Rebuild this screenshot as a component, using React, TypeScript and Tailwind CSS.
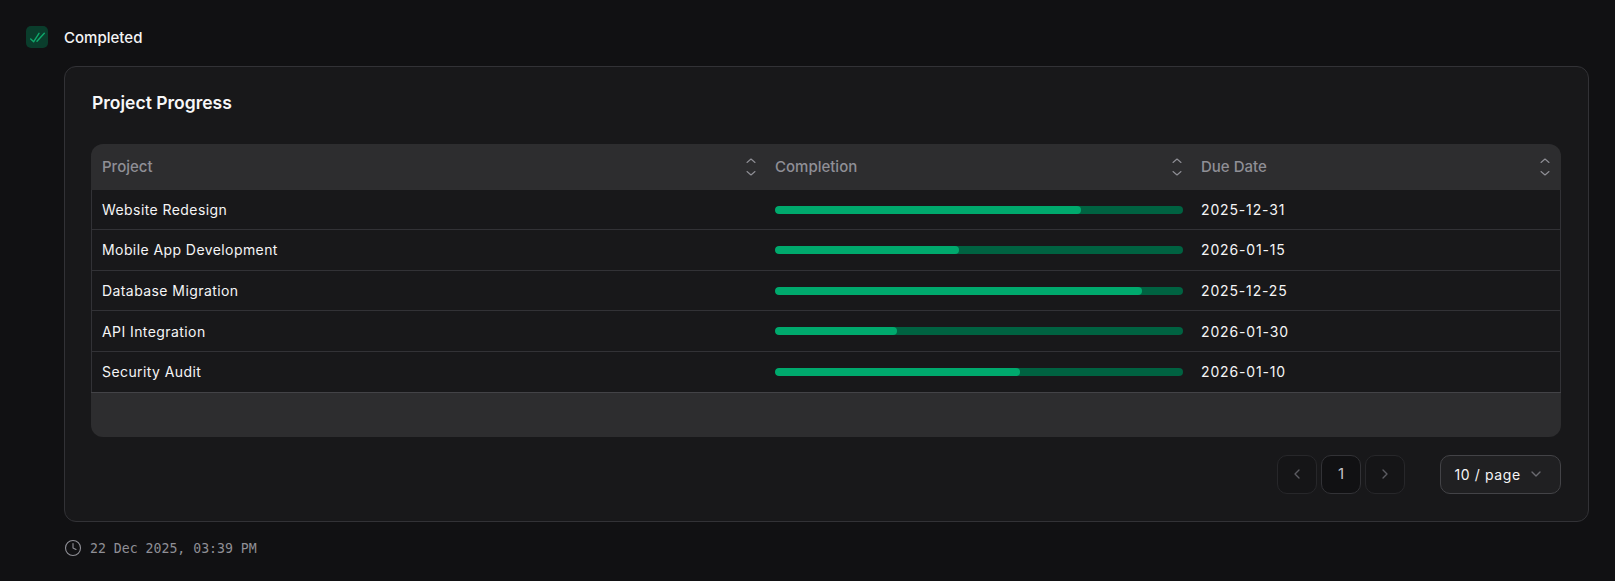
import { ChevronDown, ChevronLeft, ChevronRight, Clock } from "lucide-react";

const projects = [
  { name: "Website Redesign", percent: 75, due: "2025-12-31" },
  { name: "Mobile App Development", percent: 45, due: "2026-01-15" },
  { name: "Database Migration", percent: 90, due: "2025-12-25" },
  { name: "API Integration", percent: 30, due: "2026-01-30" },
  { name: "Security Audit", percent: 60, due: "2026-01-10" },
];

function SortIcon() {
  return (
    <svg width="10" height="18" viewBox="0 0 10 18" fill="none" stroke="#8f8f96" strokeWidth="1.1" strokeLinecap="round" strokeLinejoin="round">
      <path d="M1 4.5 L5 1 L9 4.5" />
      <path d="M1 13.5 L5 17 L9 13.5" />
    </svg>
  );
}

function HeaderCell({ label, last }: { label: string; last?: boolean }) {
  return (
    <div className={`flex h-full items-center justify-between pl-[11px] ${last ? "pr-[11px]" : "pr-[8px]"}`}>
      <span>{label}</span>
      <SortIcon />
    </div>
  );
}

export default function App() {
  return (
    <div className="min-h-[581px] bg-[#111113] font-['Inter',sans-serif] text-white">
      <div className="flex flex-col px-[26px] pt-[26px]">
        {/* Status row */}
        <div className="flex h-[22px] items-center gap-[16px]">
          <div className="flex h-[22px] w-[22px] items-center justify-center rounded-[5px] bg-[#0a3d2c]">
            <svg width="16" height="16" viewBox="0 0 16 16" fill="none" stroke="#10a86c" strokeWidth="1.4" strokeLinecap="round" strokeLinejoin="round">
              <path d="M1.7 10 L4.7 12.7 L10 4.3" />
              <path d="M8 12.3 L15.3 4.3" />
            </svg>
          </div>
          <span className="relative top-[1px] text-[15px] font-medium tracking-[0.02px] text-[#f5f5f6]">Completed</span>
        </div>

        {/* Card */}
        <div className="ml-[38px] mt-[18px] flex h-[456px] flex-col rounded-[12px] border border-[#323236] bg-[#18181a] pl-[26px] pr-[27px]">
          <h2 className="mt-[24px] h-[24px] pl-[1px] text-[17.5px] font-semibold leading-[24px] text-[#f7f7f8]">Project Progress</h2>

          <div className="mt-[29px] overflow-hidden rounded-[12px] bg-[#2d2d2f]">
            <div className="grid h-[46px] grid-cols-[673px_426px_1fr] text-[15px] font-medium text-[#8f8f96]">
              <HeaderCell label="Project" />
              <HeaderCell label="Completion" />
              <HeaderCell label="Due Date" last />
            </div>
            <div className="border-x border-[#323236] bg-[#18181a]">
              {projects.map((p) => (
                <div key={p.name} className="grid h-[40.7px] grid-cols-[672px_426px_1fr] items-center border-t border-[#323236] text-[14px] tracking-[0.42px] text-[#f5f5f6] first:h-[39px] first:border-t-0">
                  <div className="pl-[10px]">{p.name}</div>
                  <div className="pl-[11px] pr-[7px]">
                    <div className="h-2 overflow-hidden rounded-full bg-[#006241]">
                      <div className="h-full rounded-full bg-[#00a96d]" style={{ width: `${p.percent}%` }} />
                    </div>
                  </div>
                  <div className="pl-[11px] tracking-[0.85px]">{p.due}</div>
                </div>
              ))}
            </div>
            <div className="h-[45px] border-t border-[#434347]" />
          </div>

          {/* Pagination */}
          <div className="mt-[18.2px] flex items-center justify-end">
            <div className="flex items-center gap-[4px]">
              <button className="flex h-[39px] w-[40px] items-center justify-center rounded-[10px] border border-[#27272a] bg-[#151517] text-[#5c5c62]">
                <ChevronLeft size={16} />
              </button>
              <button className="flex h-[39px] w-[40px] items-center justify-center rounded-[10px] border border-[#323236] bg-[#111113] text-[15px] text-[#c5c5c9]">
                1
              </button>
              <button className="flex h-[39px] w-[40px] items-center justify-center rounded-[10px] border border-[#27272a] bg-[#151517] text-[#5c5c62]">
                <ChevronRight size={16} />
              </button>
            </div>
            <button className="ml-[35px] flex h-[39px] w-[121px] items-center justify-between rounded-[10px] border border-[#434347] bg-[#202022] pl-[13.5px] pr-[16px] text-[14px] tracking-[0.6px] text-[#f5f5f6]">
              <span>10 / page</span>
              <ChevronDown size={16} className="text-[#6b6b71]" />
            </button>
          </div>
        </div>

        {/* Timestamp */}
        <div className="ml-[38px] mt-[16px] flex h-[20px] items-center gap-[8px] text-[#8f8f96]">
          <Clock size={18} strokeWidth={1.5} />
          <span className="relative top-[1px] font-['DejaVu_Sans_Mono',monospace] text-[13.2px]">22 Dec 2025, 03:39 PM</span>
        </div>
      </div>
    </div>
  );
}
